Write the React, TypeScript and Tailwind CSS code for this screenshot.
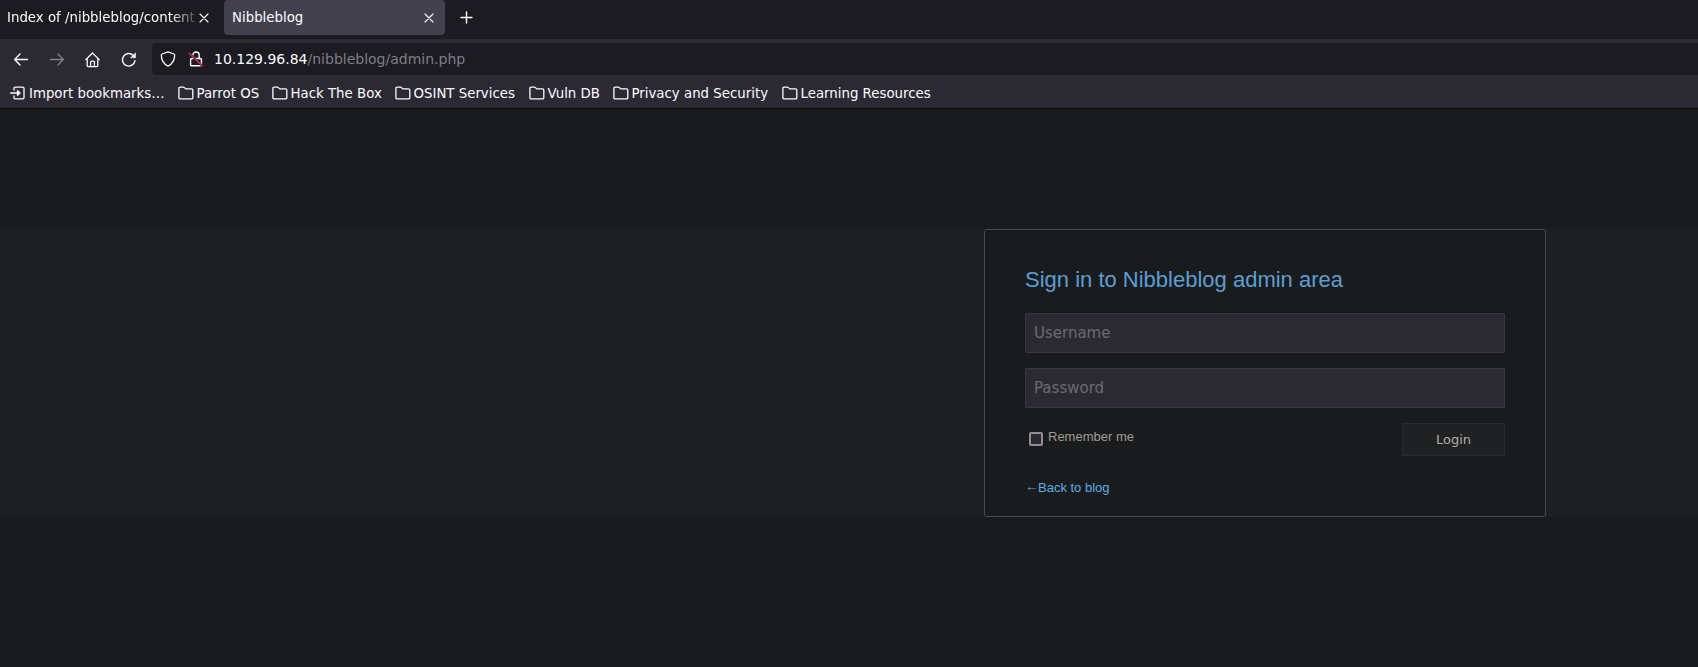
import React from 'react';

type IconProps = { className?: string };

const CloseIcon = ({ className = '' }: IconProps) => (
  <svg className={className} width="10" height="10" viewBox="0 0 10 10" fill="none" stroke="#fbfbfe" strokeWidth="1.1" strokeLinecap="round">
    <path d="M1 1l8 8M9 1L1 9" />
  </svg>
);

const ArrowIcon = ({ className = '' }: IconProps) => (
  <svg className={className} width="16" height="16" viewBox="0 0 16 16" fill="none" stroke="#fbfbfe" strokeWidth="1.4" strokeLinecap="round" strokeLinejoin="round">
    <path d="M14.500 7.500H2M7 2.100L1.600 7.500 7 12.900" />
  </svg>
);

const HomeIcon = () => (
  <svg width="16" height="16" viewBox="0 0 16 16" fill="none" stroke="#fbfbfe" strokeWidth="1.3" strokeLinecap="round" strokeLinejoin="round">
    <path d="M.8 7.600L7.500 1l6.700 6.600M2.200 6.600v7a1 1 0 0 0 1 1h8.600a1 1 0 0 0 1-1v-7" />
    <path d="M5.600 14.400v-4.200a1 1 0 0 1 1-1h1.800a1 1 0 0 1 1 1v4.200" />
  </svg>
);

const ReloadIcon = () => (
  <svg width="16" height="16" viewBox="0 0 16 16" fill="none" stroke="#fbfbfe" strokeWidth="1.4" strokeLinecap="round">
    <path d="M14 8.700A6.300 6.300 0 1 1 12.300 3.400" />
    <path d="M14.500 1v4.800H9.700z" fill="#fbfbfe" strokeWidth="0.500" strokeLinejoin="round" />
  </svg>
);

const ShieldIcon = () => (
  <svg width="16" height="16" viewBox="0 0 16 16" fill="none" stroke="#fbfbfe" strokeWidth="1.3" strokeLinejoin="round">
    <path d="M8 .9l5.900 2.100c.5.200.8.500.8 1 0 5-2.200 8.900-6.700 11.100C3.500 12.900 1.300 9 1.300 4c0-.5.300-.800.800-1z" />
  </svg>
);

const LockIcon = () => (
  <svg width="16" height="16" viewBox="0 0 16 16" fill="none" strokeLinecap="round" strokeLinejoin="round">
    <g stroke="#fbfbfe" strokeWidth="1.400">
      <rect x="2.600" y="7.500" width="10.800" height="7.200" rx="1" />
      <path d="M4.800 7.300V4.200a3.200 3.200 0 0 1 6.400 0v3.100" />
    </g>
    <path d="M1 2l13.300 13" stroke="#1c1b22" strokeWidth="2.200" />
    <path d="M1 2l13.300 13" stroke="#e22850" strokeWidth="1.400" />
  </svg>
);

const ImportIcon = () => (
  <svg width="16" height="16" viewBox="0 0 16 16" fill="none" stroke="#fbfbfe" strokeWidth="1.300" strokeLinecap="round" strokeLinejoin="round">
    <path d="M4 5V3.400a1.200 1.200 0 0 1 1.200-1.200h7.600A1.200 1.200 0 0 1 14 3.400v9.200a1.200 1.200 0 0 1-1.200 1.200H5.200A1.200 1.200 0 0 1 4 12.600V11" />
    <path d="M.7 8H9" />
    <path d="M7.500 5.700L10 8 7.500 10.300z" fill="#fbfbfe" />
  </svg>
);

const FolderIcon = () => (
  <svg width="16" height="16" viewBox="0 0 16 16" fill="none" stroke="#fbfbfe" strokeWidth="1.300" strokeLinejoin="round">
    <path d="M.9 12.700V3.400a1.200 1.200 0 0 1 1.200-1.200h3.300c.4 0 .7.100 1 .4l1.300 1.300h5.900a1.200 1.200 0 0 1 1.200 1.200v7.600a1.200 1.200 0 0 1-1.200 1.200H2.100a1.200 1.200 0 0 1-1.200-1.200z" />
  </svg>
);

const folders = [
  { label: 'Parrot OS', width: 'w-[94px]' },
  { label: 'Hack The Box', width: 'w-[123px]' },
  { label: 'OSINT Services', width: 'w-[134px]' },
  { label: 'Vuln DB', width: 'w-[84px]' },
  { label: 'Privacy and Security', width: 'w-[169px]' },
  { label: 'Learning Resources', width: 'w-[160px]' },
];

export default function App() {
  return (
    <div className="flex h-[667px] w-[1698px] flex-col overflow-hidden bg-[#1a1b1d] font-['DejaVu_Sans',sans-serif] text-[#fbfbfe]">
      <header className="shrink-0">
        <div className="flex h-[39px] items-start bg-[#1c1b22] text-[13.330px] leading-[34px]">
          <div className="flex h-[35px] w-[224px] items-center pl-[7px]">
            <span className="w-[188px] overflow-hidden whitespace-nowrap [mask-image:linear-gradient(to_right,#000_164px,transparent_194px)]">
              Index of /nibbleblog/content/
            </span>
            <CloseIcon className="ml-1" />
          </div>
          <div className="flex h-[35px] w-[221px] items-center justify-between rounded-[4px] bg-[#42414d] pr-[11px] pl-2">
            <span>Nibbleblog</span>
            <CloseIcon />
          </div>
          <svg className="mt-[11px] ml-[15px]" width="13" height="13" viewBox="0 0 13 13" stroke="#fbfbfe" strokeWidth="1.400" strokeLinecap="round">
            <path d="M6.500 1v11M1 6.500h11" />
          </svg>
        </div>

        <div className="flex h-[39px] items-center bg-[#2b2a33] pl-[13px]">
          <div className="flex w-[139px] items-center gap-5 pt-0.5">
            <ArrowIcon />
            <ArrowIcon className="-scale-x-100 opacity-40" />
            <HomeIcon />
            <ReloadIcon />
          </div>
          <div className="mt-px flex h-8 flex-1 items-center rounded-l-[4px] bg-[#1c1b22] pl-2">
            <ShieldIcon />
            <span className="ml-3">
              <LockIcon />
            </span>
            <span className="ml-[10px] text-[14px] whitespace-nowrap">
              10.129.96.84<span className="text-[#7f7e85]">/nibbleblog/admin.php</span>
            </span>
          </div>
        </div>

        <nav className="flex h-[31px] items-center border-b border-[#0c0c0d] bg-[#2b2a33] pt-px pl-[10px] text-[13.330px] whitespace-nowrap">
          <div className="flex w-[167.500px] items-center gap-[3px]">
            <ImportIcon />
            <span>Import bookmarks…</span>
          </div>
          {folders.map((f) => (
            <div key={f.label} className={`flex shrink-0 items-center gap-[3px] ${f.width}`}>
              <FolderIcon />
              <span>{f.label}</span>
            </div>
          ))}
        </nav>
      </header>

      <main className="flex flex-1 flex-col pt-[120px]">
        <div className="flex h-[288px] bg-[#1e1f21] pl-[984px]">
          <form className="h-[288px] w-[562px] rounded-[3px] border border-[#48494b] bg-[#1a1b1d] px-10 pt-[34px] font-['Liberation_Sans',sans-serif]">
            <h1 className="h-[49px] text-[22px] leading-[32px] whitespace-nowrap text-[#5a9fd4]">Sign in to Nibbleblog admin area</h1>
            <input
              className="block h-10 w-[480px] rounded-[1px] border border-[#38373f] bg-[#2b2a33] px-2 font-['DejaVu_Sans',sans-serif] text-[15px] outline-none placeholder:text-[#6c6a70]"
              placeholder="Username"
            />
            <input
              className="mt-[15px] block h-10 w-[480px] rounded-[1px] border border-[#38373f] bg-[#2b2a33] px-2 font-['DejaVu_Sans',sans-serif] text-[15px] outline-none placeholder:text-[#6c6a70]"
              placeholder="Password"
            />
            <div className="mt-[15px] flex items-start justify-between">
              <label className="flex items-start pl-1 text-[13px] leading-[14px] text-[#a09c94]">
                <input type="checkbox" className="mt-[9px] size-[14px] appearance-none rounded-[2px] border-2 border-[#8f8f94] bg-[#2b2a33]" />
                <span className="mt-[7px] ml-[5px]">Remember me</span>
              </label>
              <button type="button" className="h-[33px] w-[103px] border border-[#2a2b2d] bg-[#202123] font-['DejaVu_Sans',sans-serif] text-[13px] text-[#b0ada7]">
                Login
              </button>
            </div>
            <a className="mt-[25px] flex text-[13px] leading-[14px] text-[#5cade6]">
              <span className="w-[13px] leading-[12px]">←</span>Back to blog
            </a>
          </form>
        </div>
      </main>
    </div>
  );
}
